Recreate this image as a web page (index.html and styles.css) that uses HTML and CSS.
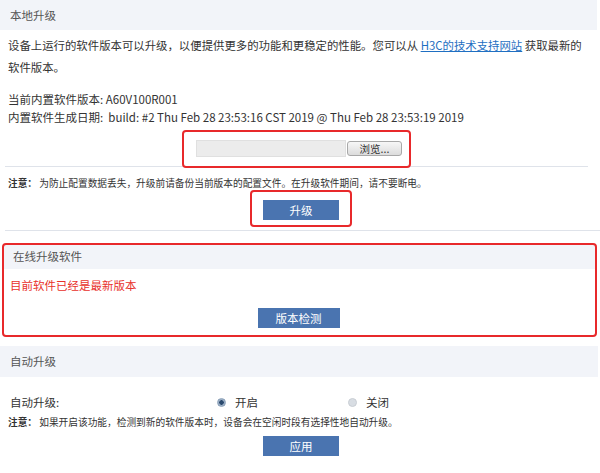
FILE: index.html
```html
<!DOCTYPE html>
<html lang="zh">
<head>
<meta charset="utf-8">
<link rel="stylesheet" href="styles.css">
</head>
<body>
<div class="page">
  <section class="sec sec-local">
    <div class="head h30">本地升级</div>
    <div class="body">
      <p class="desc">设备上运行的软件版本可以升级，以便提供更多的功能和更稳定的性能。您可以从 <a class="link">H3C的技术支持网站</a> 获取最新的软件版本。</p>
      <div class="info">
        <div>当前内置软件版本: A60V100R001</div>
        <div>内置软件生成日期:&nbsp; build: #2 Thu Feb 28 23:53:16 CST 2019 @ Thu Feb 28 23:53:19 2019</div>
      </div>
      <div class="file-row">
        <div class="mark mark-file">
          <span class="file-input"></span>
          <span class="browse">浏览...</span>
        </div>
      </div>
    </div>
    <div class="rule rule-short"></div>
    <div class="note"><b>注意：</b> 为防止配置数据丢失，升级前请备份当前版本的配置文件。在升级软件期间，请不要断电。</div>
    <div class="btn-row btn-row-up">
      <div class="mark mark-btn"><span class="btn">升级</span></div>
    </div>
    <div class="rule"></div>
  </section>

  <section class="sec sec-online mark mark-online">
    <div class="head h25">在线升级软件</div>
    <div class="red-msg">目前软件已经是最新版本</div>
    <div class="btn-row btn-row-check"><span class="btn btn-wide">版本检测</span></div>
  </section>

  <section class="sec sec-auto">
    <div class="head h31">自动升级</div>
    <div class="auto-row">
      <span class="auto-label">自动升级:</span>
      <span class="opt opt-on"><span class="radio on"></span>开启</span>
      <span class="opt opt-off"><span class="radio"></span>关闭</span>
    </div>
    <div class="note note2"><b>注意：</b> 如果开启该功能，检测到新的软件版本时，设备会在空闲时段有选择性地自动升级。</div>
    <div class="btn-row btn-row-apply"><span class="btn">应用</span></div>
  </section>
</div>
</body>
</html>
```

FILE: styles.css
```css
* { box-sizing: border-box; }
html, body { margin: 0; padding: 0; background: #fff; }
body {
  font-family: "Noto Sans CJK SC", "Noto Sans", sans-serif;
  color: #333;
  font-size: 12px;
  width: 600px;
  height: 473px;
  overflow: hidden;
}
.page { width: 600px; }

.head {
  background: #f2f4f9;
  color: #555;
  font-size: 11.5px;
  padding-left: 10px;
  margin-right: 3px;
}
.h30 { height: 30px; line-height: 30px; }
.h25 { height: 25px; line-height: 25px; }
.h31 { height: 31px; line-height: 31px; }

.body { padding: 0 8px; }
.desc {
  margin: 4px 0 0;
  line-height: 22px;
  font-size: 11.4px;
  padding-right: 4px;
}
.link { color: #1f6fc2; text-decoration: underline; }
.info {
  margin-top: 12px;
  line-height: 18px;
  font-size: 11.5px;
}

.mark { position: relative; }
.mark::after {
  content: "";
  position: absolute;
  border: 2px solid #e8292b;
  border-radius: 4px;
  pointer-events: none;
}

.file-row {
  display: flex;
  justify-content: center;
  margin-top: 14px;
}
.mark-file {
  display: flex;
  align-items: center;
  gap: 1px;
  margin-left: -2px;
}
.mark-file::after { left: -14px; right: -9px; top: -10px; bottom: -11px; }
.file-input {
  display: block;
  width: 150px;
  height: 17px;
  background: #ececec;
  border: 1px solid #e0e0e0;
}
.browse {
  display: block;
  width: 55px;
  height: 15px;
  line-height: 13px;
  font-size: 10.5px;
  text-align: center;
  color: #333;
  border: 1px solid #a8a8a8;
  border-radius: 3px;
  background: linear-gradient(#f7f7f7, #dcdcdc);
}

.rule { height: 1px; background: #dfe3ea; margin-left: 5px; }
.rule-short { margin-top: 9px; margin-right: 12px; }

.note {
  font-size: 9.7px;
  line-height: 16px;
  padding-left: 8px;
  margin-top: 8px;
}
.note b { font-weight: bold; }

.btn-row { display: flex; justify-content: center; }
.btn {
  display: block;
  width: 76px;
  height: 20px;
  line-height: 20px;
  background: #4a74b0;
  color: #fff;
  text-align: center;
  font-size: 11.5px;
}
.btn-wide { width: 82px; }
.btn-row-up { margin-top: 9px; padding-left: 2px; }
.mark-btn::after { left: -13px; right: -13px; top: -10px; bottom: -7px; }
.btn-row-up + .rule { margin-top: 10px; }

.sec-online { margin: 13px 4px 0 3px; height: 92px; }
.mark-online::after { left: -1px; right: -1px; top: -1px; bottom: -1px; }
.sec-online .head { margin-right: 0; }
.red-msg {
  color: #e8312b;
  font-size: 11.5px;
  line-height: 18px;
  margin-top: 7px;
  padding-left: 7px;
}
.btn-row-check { margin-top: 14px; padding-right: 2px; }

.sec-auto { margin-top: 10px; }
.sec-auto .head { margin-right: 2px; }
.auto-row {
  display: flex;
  align-items: center;
  height: 18px;
  margin-top: 16px;
  padding-left: 10px;
  font-size: 11.5px;
}
.auto-label { width: 207px; }
.opt { display: flex; align-items: center; }
.opt-off { margin-left: 90px; }
.radio {
  display: inline-block;
  width: 9px;
  height: 9px;
  border-radius: 50%;
  background: #d8dde3;
  border: 1px solid #c9ced4;
  margin-right: 9px;
}
.radio.on {
  background: radial-gradient(circle, #2b4a6e 0 2px, #9db0c6 2.5px);
  border-color: #8aa0b8;
}
.note2 { margin-top: 3px; padding-left: 8px; }
.btn-row-apply { margin-top: 6px; padding-left: 2px; }
```
